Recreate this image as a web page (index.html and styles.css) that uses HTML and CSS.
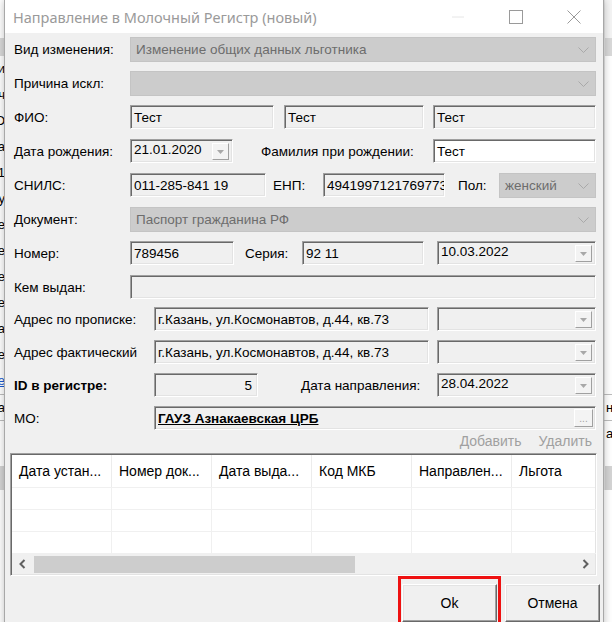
FILE: index.html
```html
<!DOCTYPE html>
<html>
<head>
    <meta charset="UTF-8">
    <link rel="stylesheet" href="styles.css">
</head>
<body>
    <!-- window behind the dialog, only its edges are visible -->
    <div class="back-app">
        <div class="bl bl-top"><span class="bl-left"></span><span class="bl-right"></span></div>
        <div class="bl bl-band"><span class="bl-left"></span><span class="bl-right"></span></div>
        <div class="bl"><span class="bl-left">Пи</span><span class="bl-right"></span></div>
        <div class="bl"><span class="bl-left">Луч</span><span class="bl-right"></span></div>
        <div class="bl"><span class="bl-left">ФИО</span><span class="bl-right"></span></div>
        <div class="bl"><span class="bl-left">Дата</span><span class="bl-right"></span></div>
        <div class="bl"><span class="bl-left">01.1</span><span class="bl-right"></span></div>
        <div class="bl"><span class="bl-left">Услу</span><span class="bl-right"></span></div>
        <div class="bl"><span class="bl-left">Дате</span><span class="bl-right"></span></div>
        <div class="bl"><span class="bl-left">Все</span><span class="bl-right"></span></div>
        <div class="bl"><span class="bl-left">Все</span><span class="bl-right"></span></div>
        <div class="bl"><span class="bl-left">Все</span><span class="bl-right"></span></div>
        <div class="bl"><span class="bl-left">Ла</span><span class="bl-right"></span></div>
        <div class="bl"><span class="bl-left">Ле</span><span class="bl-right"></span></div>
        <div class="bl bl-link"><span class="bl-left">Све</span><span class="bl-right"></span></div>
        <div class="bl bl-rule"><span class="bl-left">Дата</span><span class="bl-right">н</span></div>
        <div class="bl bl-rule"><span class="bl-left"></span><span class="bl-right">аз</span></div>
        <div class="bl bl-gap"><span class="bl-left"></span><span class="bl-right"></span></div>
        <div class="bl bl-band2"><span class="bl-left"></span><span class="bl-right"></span></div>
    </div>

    <div class="dialog">
        <div class="titlebar">
            <span class="title">Направление в Молочный Регистр (новый)</span>
            <div class="win-buttons">
                <span class="wbtn">
                    <svg width="12" height="2" viewBox="0 0 12 2"><line x1="0" y1="1" x2="12" y2="1" stroke="#e6e6e6" stroke-width="1"/></svg>
                </span>
                <span class="wbtn">
                    <svg width="14" height="14" viewBox="0 0 14 14"><rect x="0.5" y="0.5" width="13" height="13" fill="none" stroke="#9a9a9a" stroke-width="1"/></svg>
                </span>
                <span class="wbtn">
                    <svg width="14" height="14" viewBox="0 0 14 14"><path d="M0.5 0.5 L13.5 13.5 M13.5 0.5 L0.5 13.5" stroke="#9a9a9a" stroke-width="1" fill="none"/></svg>
                </span>
            </div>
        </div>

        <div class="form">
            <div class="row">
                <span class="lbl">Вид изменения:</span>
                <div class="combo">Изменение общих данных льготника
                    <svg class="chev" width="11" height="6" viewBox="0 0 11 6"><polyline points="0.5,0.5 5.5,5.5 10.5,0.5" fill="none" stroke="#a9a9a9"/></svg>
                </div>
            </div>
            <div class="row">
                <span class="lbl">Причина искл:</span>
                <div class="combo">
                    <svg class="chev" width="11" height="6" viewBox="0 0 11 6"><polyline points="0.5,0.5 5.5,5.5 10.5,0.5" fill="none" stroke="#a9a9a9"/></svg>
                </div>
            </div>
            <div class="row">
                <span class="lbl">ФИО:</span>
                <div class="box w-fam">Тест</div>
                <div class="box w-name">Тест</div>
                <div class="box grow">Тест</div>
            </div>
            <div class="row">
                <span class="lbl">Дата рождения:</span>
                <div class="box date w-birth">21.01.2020<span class="drop"><svg width="7" height="4" viewBox="0 0 7 4"><polygon points="0,0 7,0 3.5,4" fill="#a8a8a8"/></svg></span></div>
                <span class="lbl lbl-maiden">Фамилия при рождении:</span>
                <div class="box white grow">Тест</div>
            </div>
            <div class="row">
                <span class="lbl">СНИЛС:</span>
                <div class="box w-snils">011-285-841 19</div>
                <span class="lbl lbl-enp">ЕНП:</span>
                <div class="box w-enp">4941997121769773</div>
                <span class="lbl lbl-sex">Пол:</span>
                <div class="combo">женский
                    <svg class="chev" width="11" height="6" viewBox="0 0 11 6"><polyline points="0.5,0.5 5.5,5.5 10.5,0.5" fill="none" stroke="#a9a9a9"/></svg>
                </div>
            </div>
            <div class="row">
                <span class="lbl">Документ:</span>
                <div class="combo">Паспорт гражданина РФ
                    <svg class="chev" width="11" height="6" viewBox="0 0 11 6"><polyline points="0.5,0.5 5.5,5.5 10.5,0.5" fill="none" stroke="#a9a9a9"/></svg>
                </div>
            </div>
            <div class="row">
                <span class="lbl">Номер:</span>
                <div class="box w-num">789456</div>
                <span class="lbl lbl-series">Серия:</span>
                <div class="box w-series">92 11</div>
                <div class="box date grow push">10.03.2022<span class="drop"><svg width="7" height="4" viewBox="0 0 7 4"><polygon points="0,0 7,0 3.5,4" fill="#a8a8a8"/></svg></span></div>
            </div>
            <div class="row">
                <span class="lbl">Кем выдан:</span>
                <div class="box grow"></div>
            </div>
        </div>

        <div class="form form-lower">
            <div class="row">
                <span class="lbl lbl-wide">Адрес по прописке:</span>
                <div class="box w-addr">г.Казань, ул.Космонавтов, д.44, кв.73</div>
                <div class="box date grow push-sm"><span class="drop"><svg width="7" height="4" viewBox="0 0 7 4"><polygon points="0,0 7,0 3.5,4" fill="#a8a8a8"/></svg></span></div>
            </div>
            <div class="row">
                <span class="lbl lbl-wide">Адрес фактический</span>
                <div class="box w-addr">г.Казань, ул.Космонавтов, д.44, кв.73</div>
                <div class="box date grow push-sm"><span class="drop"><svg width="7" height="4" viewBox="0 0 7 4"><polygon points="0,0 7,0 3.5,4" fill="#a8a8a8"/></svg></span></div>
            </div>
            <div class="row">
                <span class="lbl lbl-wide bold">ID в регистре:</span>
                <div class="box w-id right">5</div>
                <span class="lbl lbl-senddate">Дата направления:</span>
                <div class="box date grow">28.04.2022<span class="drop"><svg width="7" height="4" viewBox="0 0 7 4"><polygon points="0,0 7,0 3.5,4" fill="#a8a8a8"/></svg></span></div>
            </div>
            <div class="row">
                <span class="lbl lbl-wide">МО:</span>
                <div class="box grow mo">
                    <span class="mo-name">ГАУЗ Азнакаевская ЦРБ</span>
                    <span class="dots">...</span>
                </div>
            </div>

            <div class="links">
                <span>Добавить</span>
                <span>Удалить</span>
            </div>

            <div class="grid">
                <div class="grid-head">
                    <div class="cell">Дата устан...</div>
                    <div class="cell">Номер док...</div>
                    <div class="cell">Дата выда...</div>
                    <div class="cell">Код МКБ</div>
                    <div class="cell">Направлен...</div>
                    <div class="cell">Льгота</div>
                </div>
                <div class="grid-row">
                    <div class="cell"></div><div class="cell"></div><div class="cell"></div><div class="cell"></div><div class="cell"></div><div class="cell"></div>
                </div>
                <div class="grid-row">
                    <div class="cell"></div><div class="cell"></div><div class="cell"></div><div class="cell"></div><div class="cell"></div><div class="cell"></div>
                </div>
                <div class="grid-row">
                    <div class="cell"></div><div class="cell"></div><div class="cell"></div><div class="cell"></div><div class="cell"></div><div class="cell"></div>
                </div>
                <div class="hscroll">
                    <span class="arrow">
                        <svg width="7" height="10" viewBox="0 0 7 10"><polyline points="5.5,1 1.5,5 5.5,9" fill="none" stroke="#606060" stroke-width="2"/></svg>
                    </span>
                    <span class="thumb"></span>
                    <span class="arrow arrow-right">
                        <svg width="7" height="10" viewBox="0 0 7 10"><polyline points="1.5,1 5.5,5 1.5,9" fill="none" stroke="#606060" stroke-width="2"/></svg>
                    </span>
                </div>
            </div>

            <div class="buttons">
                <button class="btn btn-ok">Ok</button>
                <button class="btn">Отмена</button>
            </div>
        </div>
    </div>
</body>
</html>
```

FILE: styles.css
```css
* {
    margin: 0;
    padding: 0;
    box-sizing: border-box;
}

body {
    position: relative;
    width: 612px;
    height: 622px;
    overflow: hidden;
    background: #fff;
    font-family: "Liberation Sans", Arial, sans-serif;
    font-size: 13.5px;
    color: #000;
}

/* background window */
.back-app {
    position: absolute;
    left: 0;
    top: 0;
    width: 612px;
    height: 622px;
    display: flex;
    flex-direction: column;
}

.bl {
    display: flex;
    justify-content: space-between;
    height: 26px;
    font-size: 13px;
    line-height: 26px;
}

.bl-left {
    width: 5px;
    overflow: hidden;
    display: flex;
    justify-content: flex-end;
    white-space: nowrap;
}

.bl-right {
    width: 8px;
    overflow: hidden;
    white-space: nowrap;
    border-left: 1px solid #e4e4e4;
    padding-left: 1px;
}

.bl-top {
    height: 38px;
}

.bl-top .bl-right {
    background: #f4f4f4;
}

.bl-band {
    height: 18px;
}

.bl-band .bl-left,
.bl-band .bl-right {
    background: #d9d9d9;
}

.bl-link .bl-left {
    color: #1a5bd0;
    text-decoration: underline;
}

.bl-rule {
    border-top: 1px solid #bdbdbd;
}

.bl-gap {
    height: 20px;
}

.bl-band2 {
    height: 24px;
}

.bl-band2 .bl-left,
.bl-band2 .bl-right {
    background: #d4d4d4;
}

/* dialog window */
.dialog {
    position: absolute;
    left: 4px;
    top: 0;
    width: 600px;
    height: 650px;
    background: #f0f0f0;
    border: 1px solid #a8a8a8;
    border-top: none;
    box-shadow: 0 0 8px rgba(0, 0, 0, 0.25);
}

.titlebar {
    display: flex;
    align-items: center;
    justify-content: space-between;
    height: 33px;
    background: #fff;
}

.title {
    padding-left: 8px;
    font-family: "Noto Sans", "Open Sans", sans-serif;
    font-size: 14.5px;
    color: #9a9a9a;
}

.win-buttons {
    display: flex;
    height: 100%;
}

.wbtn {
    width: 58px;
    display: flex;
    align-items: center;
    justify-content: center;
}

.form {
    padding: 4px 7px 0 9px;
}

.form .row:last-child {
    margin-bottom: 8px;
}

.form-lower {
    padding-top: 0;
}

.row {
    display: flex;
    align-items: center;
    height: 24px;
    margin-bottom: 10px;
}

.form-lower .row {
    margin-bottom: 9px;
}

.form-lower .row:nth-child(4) {
    margin-bottom: 0;
}

.lbl {
    flex: none;
    width: 116px;
    white-space: nowrap;
}

.lbl-wide {
    width: 140px;
}

.bold {
    font-weight: bold;
}

.lbl-maiden {
    width: 200px;
    padding-left: 28px;
}

.lbl-enp {
    width: 57px;
    padding-left: 7px;
}

.lbl-sex {
    width: 54px;
    padding-left: 13px;
}

.lbl-series {
    width: 68px;
    padding-left: 11px;
}

.lbl-senddate {
    width: 179px;
    padding-left: 43px;
}

/* disabled combo box */
.combo {
    position: relative;
    flex: 1;
    height: 25px;
    display: flex;
    align-items: center;
    padding-left: 5px;
    background: #cccccc;
    border: 1px solid #c4c4c4;
    color: #6d6d6d;
    white-space: nowrap;
}

.chev {
    position: absolute;
    right: 6px;
    top: 9px;
}

/* sunken text box */
.box {
    flex: none;
    height: 24px;
    display: flex;
    align-items: center;
    padding: 0 3px 0 3px;
    background: #f0f0f0;
    border: 1px solid;
    border-color: #a0a0a0 #fff #fff #a0a0a0;
    box-shadow: inset 1px 1px 0 #696969, inset -1px -1px 0 #e3e3e3;
    white-space: nowrap;
    overflow: hidden;
}

.box.white {
    background: #fff;
}

.box.grow {
    flex: 1;
}

.box.right {
    justify-content: flex-end;
    padding-right: 5px;
}

.push {
    margin-left: 13px;
}

.push-sm {
    margin-left: 8px;
}

.w-fam { width: 144px; margin-right: 10px; }
.w-name { width: 140px; margin-right: 9px; }
.w-birth { width: 103px; }
.w-snils { width: 136px; }
.w-enp { width: 122px; }
.w-num { width: 104px; }
.w-series { width: 122px; }
.w-addr { width: 275px; }
.w-id { width: 104px; }

.date {
    align-items: flex-start;
    padding-top: 2px;
}

.drop {
    margin-left: auto;
    margin-top: 1px;
    flex: none;
    width: 17px;
    height: 17px;
    display: flex;
    align-items: center;
    justify-content: center;
    background: #f3f3f3;
    border: 1px solid;
    border-color: #fff #a0a0a0 #a0a0a0 #fff;
}

.mo {
    padding-right: 2px;
}

.mo-name {
    font-weight: bold;
    text-decoration: underline;
}

.dots {
    margin-left: auto;
    width: 19px;
    height: 18px;
    display: flex;
    align-items: flex-end;
    justify-content: center;
    font-size: 10px;
    line-height: 14px;
    color: #a0a0a0;
    background: #f3f3f3;
    border: 1px solid;
    border-color: #fff #a0a0a0 #a0a0a0 #fff;
}

.links {
    display: flex;
    justify-content: flex-end;
    gap: 17px;
    height: 23px;
    padding: 3px 4px 0 0;
    color: #a0a0a0;
    font-size: 14px;
}

/* table */
.grid {
    height: 123px;
    margin: 0 -1px 0 -4px;
    padding: 1px;
    background: #fff;
    border: 1px solid;
    border-color: #a0a0a0 #fff #fff #a0a0a0;
    box-shadow: inset 1px 1px 0 #696969, inset -1px -1px 0 #e3e3e3;
    display: flex;
    flex-direction: column;
    overflow: hidden;
}

.grid-head,
.grid-row {
    display: grid;
    grid-template-columns: repeat(6, 100px);
    flex: none;
}

.grid-head {
    height: 33px;
    border-bottom: 1px solid #f0f0f0;
    font-size: 14px;
}

.grid-head .cell {
    display: flex;
    align-items: center;
    padding-left: 7px;
    border-right: 1px solid #ececec;
    white-space: nowrap;
    overflow: hidden;
}

.grid-row {
    height: 22px;
}

.grid-row .cell {
    border-right: 1px solid #f0f0f0;
    border-bottom: 1px solid #f0f0f0;
}

.hscroll {
    display: flex;
    align-items: center;
    height: 20px;
    background: #f0f0f0;
}

.arrow {
    width: 20px;
    height: 100%;
    display: flex;
    align-items: center;
    justify-content: center;
    flex: none;
}

.arrow-right {
    margin-left: auto;
}

.thumb {
    width: 321px;
    height: 17px;
    margin-left: 2px;
    background: #cdcdcd;
}

/* dialog buttons */
.buttons {
    display: flex;
    justify-content: flex-end;
    gap: 8px;
    margin: 8px -4px 0 0;
}

.btn {
    position: relative;
    width: 95px;
    height: 38px;
    font-family: "Liberation Sans", Arial, sans-serif;
    font-size: 14px;
    color: #000;
    background: #f0f0f0;
    border: 1px solid;
    border-color: #fff #696969 #696969 #fff;
    box-shadow: inset -1px -1px 0 #a0a0a0, inset 1px 1px 0 #e3e3e3;
}

.btn-ok::after {
    content: "";
    position: absolute;
    left: -5px;
    right: -5px;
    top: -9px;
    bottom: -10px;
    border: 3px solid #ee1111;
}
```
